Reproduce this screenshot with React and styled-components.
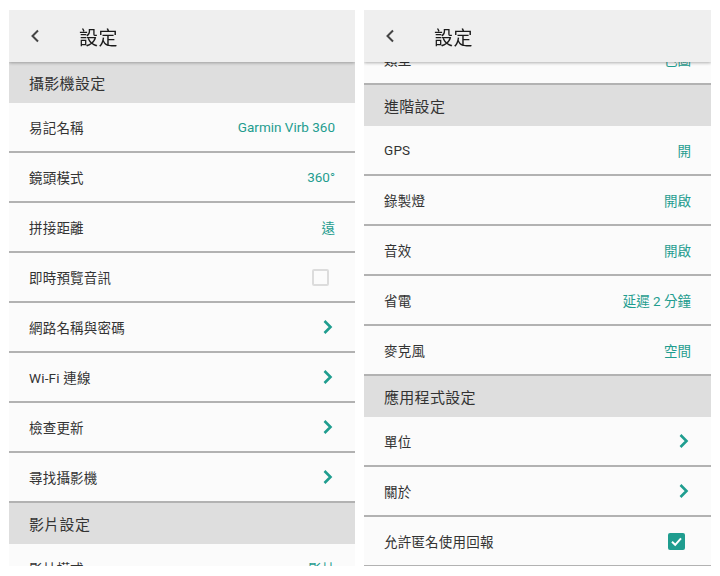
import React, { useLayoutEffect, useRef } from "react";
import styled, { createGlobalStyle } from "styled-components";

const GlobalStyle = createGlobalStyle`
  html, body { margin: 0; padding: 0; background: #ffffff; }
  body { font-family: Roboto, "Noto Sans CJK TC", sans-serif; }
`;

const TEAL = "#1f9d8f";

const Page = styled.div`
  display: grid;
  grid-template-columns: 346px 347px;
  column-gap: 9px;
  padding: 10px 9px;
  width: 720px;
  height: 576px;
  box-sizing: border-box;
`;

const Panel = styled.section`
  display: flex;
  flex-direction: column;
  height: 556px;
  overflow: hidden;
  background: #fbfbfb;
`;

const Header = styled.header`
  position: relative;
  z-index: 1;
  flex: 0 0 52px;
  display: flex;
  align-items: center;
  background: #efefef;
  box-shadow: 0 1px 3px rgba(0, 0, 0, 0.3);
  padding-left: ${(p) => p.$pad}px;
`;

const BackIcon = styled.svg`
  width: 10px;
  height: 14px;
  flex: none;
`;

const Title = styled.h1`
  margin: 0 0 0 ${(p) => p.$gap}px;
  font-size: 19px;
  font-weight: 400;
  color: #1a1a1a;
  letter-spacing: 0.5px;
`;

const Body = styled.div`
  flex: 1;
  overflow-y: auto;
  scrollbar-width: none;
  &::-webkit-scrollbar { display: none; }
`;

const SectionHead = styled.div`
  height: 41px;
  display: flex;
  align-items: center;
  padding-left: 20px;
  background: #dedede;
  font-size: 15px;
  color: #333;
  letter-spacing: 0.3px;
`;

const Row = styled.div`
  height: 48px;
  display: flex;
  align-items: center;
  justify-content: space-between;
  padding: 0 20px;
  border-bottom: 2px solid #b2b2b2;
  background: #fbfbfb;
`;

const Label = styled.span`
  font-size: 13.5px;
  color: #333;
  letter-spacing: 0.2px;
`;

const Value = styled.span`
  font-size: 13.5px;
  color: ${TEAL};
`;

const Box = styled.span`
  width: 17px;
  height: 17px;
  box-sizing: border-box;
  margin-right: 6px;
  border-radius: 2px;
  display: flex;
  align-items: center;
  justify-content: center;
  border: ${(p) => (p.$checked ? "none" : "2px solid #dcdcdc")};
  background: ${(p) => (p.$checked ? TEAL : "transparent")};
`;

const ChevronSvg = styled.svg`
  width: 12px;
  height: 16px;
  margin-right: 1px;
`;

const Back = () => (
  <BackIcon viewBox="0 0 10 14">
    <polyline points="8,1.5 2.5,7 8,12.5" fill="none" stroke="#444" strokeWidth="2" />
  </BackIcon>
);

const Chevron = () => (
  <ChevronSvg viewBox="0 0 12 16">
    <polyline points="2.5,2 8.5,8 2.5,14" fill="none" stroke={TEAL} strokeWidth="2.6" />
  </ChevronSvg>
);

const Check = ({ checked }) => (
  <Box $checked={checked}>
    {checked && (
      <svg width="13" height="13" viewBox="0 0 13 13">
        <polyline points="2,6.8 5.2,9.8 11,3.4" fill="none" stroke="#fff" strokeWidth="2" />
      </svg>
    )}
  </Box>
);

const Item = ({ label, value, kind, checked }) => (
  <Row>
    <Label>{label}</Label>
    {kind === "chevron" && <Chevron />}
    {kind === "check" && <Check checked={checked} />}
    {value && <Value>{value}</Value>}
  </Row>
);

const PanelHeader = ({ pad, gap }) => (
  <Header $pad={pad}>
    <Back />
    <Title $gap={gap}>設定</Title>
  </Header>
);

const leftItems = [
  { section: "攝影機設定" },
  { label: "易記名稱", value: "Garmin Virb 360" },
  { label: "鏡頭模式", value: "360°" },
  { label: "拼接距離", value: "遠" },
  { label: "即時預覽音訊", kind: "check", checked: false },
  { label: "網路名稱與密碼", kind: "chevron" },
  { label: "Wi-Fi 連線", kind: "chevron" },
  { label: "檢查更新", kind: "chevron" },
  { label: "尋找攝影機", kind: "chevron" },
  { section: "影片設定" },
  { label: "影片模式", value: "影片" },
];

const rightItems = [
  { label: "類型", value: "色圖" },
  { section: "進階設定" },
  { label: "GPS", value: "開" },
  { label: "錄製燈", value: "開啟" },
  { label: "音效", value: "開啟" },
  { label: "省電", value: "延遲 2 分鐘" },
  { label: "麥克風", value: "空間" },
  { section: "應用程式設定" },
  { label: "單位", kind: "chevron" },
  { label: "關於", kind: "chevron" },
  { label: "允許匿名使用回報", kind: "check", checked: true },
];

const List = ({ items }) =>
  items.map((it, i) =>
    it.section ? (
      <SectionHead key={i}>{it.section}</SectionHead>
    ) : (
      <Item key={i} {...it} />
    )
  );

export default function App() {
  const scrolled = useRef(null);
  useLayoutEffect(() => {
    if (scrolled.current) scrolled.current.scrollTop = 27;
  }, []);
  return (
    <>
      <GlobalStyle />
      <Page>
        <Panel>
          <PanelHeader pad={21} gap={39} />
          <Body>
            <List items={leftItems} />
          </Body>
        </Panel>
        <Panel>
          <PanelHeader pad={21} gap={39} />
          <Body ref={scrolled}>
            <List items={rightItems} />
          </Body>
        </Panel>
      </Page>
    </>
  );
}
